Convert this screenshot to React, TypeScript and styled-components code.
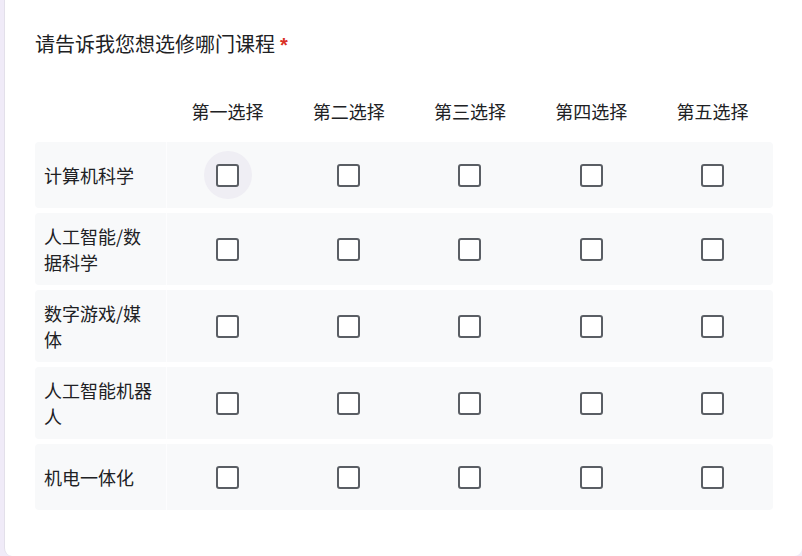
import React from "react";
import styled, { createGlobalStyle } from "styled-components";

const GlobalStyle = createGlobalStyle`
  html, body {
    margin: 0;
    padding: 0;
    background: #f0ebf8;
    overflow: hidden;
  }
  body {
    font-family: "Noto Sans CJK SC", "Noto Sans", "Liberation Sans", sans-serif;
    color: #202124;
  }
`;

const Card = styled.div`
  box-sizing: border-box;
  margin-left: 4px;
  width: 798px;
  height: 556px;
  background: #ffffff;
  border-left: 1px solid #e3e0ea;
  border-radius: 0 0 8px 8px;
  padding: 32px 0 0 30px;
`;

const Title = styled.div`
  font-size: 20px;
  line-height: 24px;
  color: #202124;
  margin-bottom: 28px;
`;

const Star = styled.span`
  color: #d93025;
  margin-left: 5px;
  font-family: "Liberation Sans", sans-serif;
  font-weight: 700;
`;

const Matrix = styled.div`
  width: 738px;
  display: flex;
  flex-direction: column;
  gap: 5px;
`;

const HeaderRow = styled.div`
  display: grid;
  grid-template-columns: 132px repeat(5, 1fr);
  height: 52px;
  align-items: center;
`;

const HeaderCell = styled.div`
  text-align: center;
  font-size: 18px;
  line-height: 26px;
  color: #202124;
`;

const Row = styled.div`
  display: grid;
  grid-template-columns: 132px repeat(5, 1fr);
  background: #f8f9fa;
  border-radius: 4px;
`;

const Label = styled.div`
  display: flex;
  align-items: center;
  padding: 10px 14px 10px 9px;
  font-size: 18px;
  line-height: 26px;
  color: #202124;
  border-right: 1px solid rgba(255, 255, 255, 0.7);
`;

const Option = styled.div`
  display: flex;
  align-items: center;
  justify-content: center;
  padding: 9px 0;
`;

const Ripple = styled.div<{ $active?: boolean }>`
  width: 48px;
  height: 48px;
  border-radius: 50%;
  display: flex;
  align-items: center;
  justify-content: center;
  background: ${(p) => (p.$active ? "#efeef4" : "transparent")};
`;

const Box = styled.div`
  box-sizing: border-box;
  width: 23px;
  height: 23px;
  border: 2px solid #5a5e64;
  border-radius: 3px;
  background: #ffffff;
`;

const columns = ["第一选择", "第二选择", "第三选择", "第四选择", "第五选择"];
const rows = ["计算机科学", "人工智能/数据科学", "数字游戏/媒体", "人工智能机器人", "机电一体化"];

export default function App() {
  return (
    <>
      <GlobalStyle />
      <Card>
        <Title>
          请告诉我您想选修哪门课程<Star>*</Star>
        </Title>
        <Matrix>
          <HeaderRow>
            <div />
            {columns.map((c) => (
              <HeaderCell key={c}>{c}</HeaderCell>
            ))}
          </HeaderRow>
          {rows.map((r, ri) => (
            <Row key={r}>
              <Label>{r}</Label>
              {columns.map((c, ci) => (
                <Option key={c}>
                  <Ripple $active={ri === 0 && ci === 0}>
                    <Box />
                  </Ripple>
                </Option>
              ))}
            </Row>
          ))}
        </Matrix>
      </Card>
    </>
  );
}
